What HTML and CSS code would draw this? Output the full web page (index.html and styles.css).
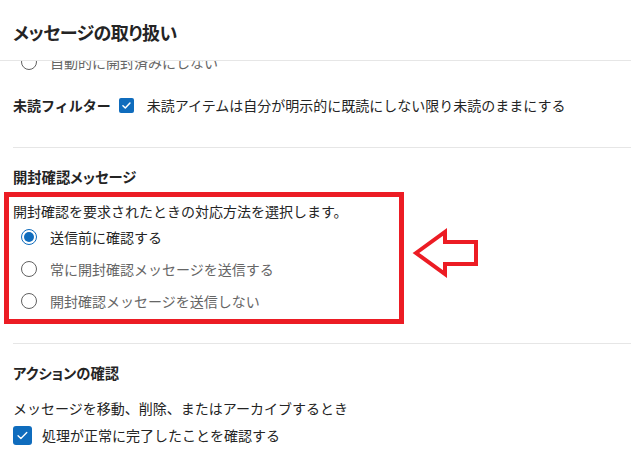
FILE: index.html
```html
<!DOCTYPE html>
<html lang="ja">
<head>
<meta charset="utf-8">
<title>メッセージの取り扱い</title>
<link rel="stylesheet" href="styles.css">
</head>
<body>
<div class="panel">
  <header class="panel-header">
    <h1 class="panel-title">メッセージの取り扱い</h1>
  </header>
  <div class="scroll">
    <div class="scroll-inner">
      <div class="radio-row muted">
        <span class="radio"></span>
        <span class="radio-label">自動的に開封済みにしない</span>
      </div>

      <div class="filter-row">
        <span class="filter-label">未読フィルター</span>
        <span class="checkbox small">
          <svg viewBox="0 0 16 16" width="15" height="15"><path d="M4.2 8.2l2.5 2.4 5-5.2" fill="none" stroke="#fff" stroke-width="1.6" stroke-linecap="round" stroke-linejoin="round"/></svg>
        </span>
        <span class="filter-text">未読アイテムは自分が明示的に既読にしない限り未読のままにする</span>
      </div>

      <hr class="divider first">

      <section class="section">
        <h2 class="section-title">開封確認メッセージ</h2>
        <div class="annot-row">
          <div class="annot-box">
            <p class="desc">開封確認を要求されたときの対応方法を選択します。</p>
            <div class="radio-row">
              <span class="radio checked"></span>
              <span class="radio-label">送信前に確認する</span>
            </div>
            <div class="radio-row muted">
              <span class="radio"></span>
              <span class="radio-label">常に開封確認メッセージを送信する</span>
            </div>
            <div class="radio-row muted">
              <span class="radio"></span>
              <span class="radio-label">開封確認メッセージを送信しない</span>
            </div>
          </div>
          <svg class="annot-arrow" width="70" height="52" viewBox="0 0 70 52">
            <polygon points="6,26 35,5 35,15 66,15 66,37 35,37 35,47" fill="none" stroke="#ec1c24" stroke-width="4" stroke-linejoin="miter"/>
          </svg>
        </div>
      </section>

      <hr class="divider second">

      <section class="section">
        <h2 class="section-title action">アクションの確認</h2>
        <p class="desc plain">メッセージを移動、削除、またはアーカイブするとき</p>
        <div class="check-row">
          <span class="checkbox large">
            <svg viewBox="0 0 20 20" width="19" height="19"><path d="M5.3 10.2l3 3 6.2-6.4" fill="none" stroke="#fff" stroke-width="1.4" stroke-linecap="round" stroke-linejoin="round"/></svg>
          </span>
          <span class="check-text">処理が正常に完了したことを確認する</span>
        </div>
      </section>
    </div>
  </div>
</div>
</body>
</html>
```

FILE: styles.css
```css
* { box-sizing: border-box; }
html, body {
  margin: 0;
  padding: 0;
  background: #ffffff;
}
body {
  font-family: "Noto Sans CJK JP", "Noto Sans", sans-serif;
  color: #242424;
  font-size: 14px;
  width: 631px;
  height: 470px;
  overflow: hidden;
}
.panel {
  display: flex;
  flex-direction: column;
  height: 470px;
}
.panel-header {
  height: 61px;
  border-bottom: 1px solid #e6e6e6;
  display: flex;
  align-items: center;
  padding: 4px 0 0 13px;
  flex: none;
}
.panel-title {
  margin: 0;
  font-size: 18px;
  font-weight: 700;
  line-height: 26px;
  letter-spacing: -0.5px;
  font-feature-settings: "palt";
  color: #242424;
}
.scroll {
  flex: 1;
  overflow: hidden;
}
.scroll-inner {
  margin-top: -15px;
}
.radio-row {
  display: flex;
  align-items: center;
  height: 32px;
  padding-left: 21px;
  gap: 13px;
}
.radio {
  width: 16px;
  height: 16px;
  border-radius: 50%;
  border: 1px solid #616161;
  flex: none;
  display: flex;
  align-items: center;
  justify-content: center;
  background: #fff;
}
.radio.checked {
  border-color: #0f6cbd;
}
.radio.checked::after {
  content: "";
  width: 10px;
  height: 10px;
  border-radius: 50%;
  background: #0f6cbd;
}
.radio-label {
  line-height: 20px;
  color: #242424;
}
.radio-row.muted .radio-label {
  color: #666666;
}
.filter-row {
  display: flex;
  align-items: center;
  height: 24px;
  margin-top: 15px;
  padding-left: 13px;
}
.filter-label {
  font-weight: 700;
  line-height: 20px;
  margin-right: 8px;
}
.checkbox {
  display: flex;
  align-items: center;
  justify-content: center;
  background: #0f6cbd;
  border-radius: 2px;
  flex: none;
}
.checkbox.small {
  width: 15px;
  height: 15px;
  margin-right: 13px;
}
.checkbox.large {
  width: 19px;
  height: 19px;
  margin-right: 10px;
  border-radius: 3px;
}
.filter-text, .check-text {
  line-height: 20px;
}
.divider {
  border: 0;
  height: 1px;
  background: #e6e6e6;
  margin: 0 0 0 13px;
}
.divider.first { margin-top: 30px; }
.divider.second { margin-top: 19px; }
.section {
  padding-left: 13px;
}
.section-title {
  margin: 18px 0 0;
  font-size: 14.3px;
  font-weight: 700;
  line-height: 22px;
  font-feature-settings: "palt";
}
.annot-row {
  display: flex;
  align-items: flex-start;
  margin-top: 4px;
  margin-left: -9px;
}
.annot-box {
  width: 400px;
  border: 5px solid #ec1c24;
  padding: 4px 0 2px 4px;
}
.annot-box .radio-row {
  padding-left: 8px;
}
.desc {
  margin: 0;
  line-height: 20px;
}
.desc.plain {
  margin-top: 14px;
}
.annot-arrow {
  flex: none;
  margin-left: 6px;
  margin-top: 35px;
}
.check-row {
  display: flex;
  align-items: center;
  height: 24px;
  margin-top: 5px;
}
```
